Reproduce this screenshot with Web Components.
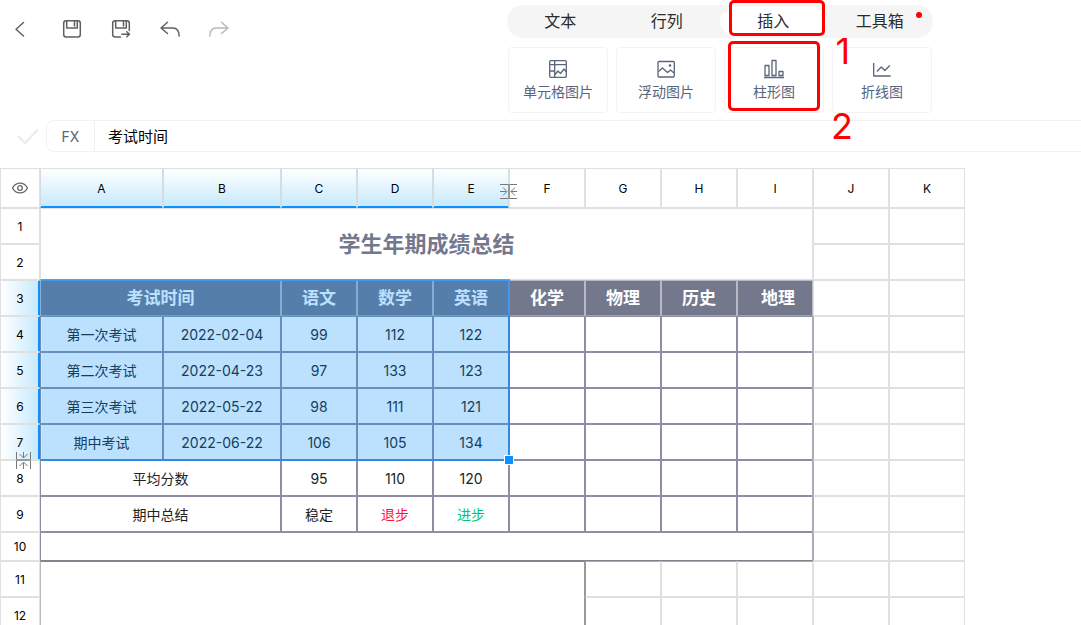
<!DOCTYPE html>
<html lang="zh-CN">
<head>
<meta charset="utf-8">
<title>学生年期成绩总结</title>
<style>
  body { margin: 0; height: 100vh; overflow: hidden; background: #fff; color: #222;
    font-family: Inter, "Noto Sans CJK SC", sans-serif; font-size: 14px; }
</style>
</head>
<body>
<sheet-app></sheet-app>

<template id="sheet-app">
  <style>
    :host { display: block; }
    header { display: flex; justify-content: space-between; align-items: flex-start; height: 120px; }
    nav { display: flex; gap: 25px; padding: 17px 0 0 8px; }
    nav icon-button:first-child { margin-right: 3px; }
    .tools { width: 426px; margin: 5px 148px 0 0; }
    .tabs { display: grid; grid-template-columns: repeat(4, 1fr); border-radius: 17px; background: #f5f5f5; }
    .cards { display: grid; grid-template-columns: repeat(4, 100px); gap: 8px; margin: 9px 0 0 1px; }
    data-sheet { margin-top: 16px; }
  </style>
  <header>
    <nav>
      <icon-button label="返回"><svg width="24" height="24" viewBox="0 0 24 24"><path d="M15.500 5.500 8 12.200 15.500 19"/></svg></icon-button>
      <icon-button label="保存"><svg width="24" height="24" viewBox="0 0 24 24"><rect x="3.700" y="3.700" width="16.600" height="16.200" rx="2.500"/><path d="M6.700 4v7h10.600V4M14.500 4v5"/></svg></icon-button>
      <icon-button label="另存为"><svg width="24" height="24" viewBox="0 0 24 24"><path d="M11.500 19.900H6.200a2.500 2.500 0 0 1-2.500-2.500V6.200a2.500 2.500 0 0 1 2.500-2.500h11.600a2.500 2.500 0 0 1 2.500 2.500v7.300M6.700 4v7h10.600V4M14.500 4v5M12.800 17.300h7.500M17.800 14.800l2.700 2.500-2.700 2.500"/></svg></icon-button>
      <icon-button label="撤销"><svg width="24" height="24" viewBox="0 0 24 24"><path d="M9.500 5.300 3 11l6.500 5.500M3.300 11H15c4 0 6 2.800 6.200 8"/></svg></icon-button>
      <icon-button label="重做" faded><svg width="24" height="24" viewBox="0 0 24 24"><path d="M14.500 5.300 21 11l-6.500 5.500M20.700 11H9c-4 0-6 2.800-6.200 8"/></svg></icon-button>
    </nav>
    <div class="tools">
      <div class="tabs">
        <tool-tab>文本</tool-tab>
        <tool-tab>行列</tool-tab>
        <tool-tab active>插入<step-mark slot="mark" class="tab">1</step-mark></tool-tab>
        <tool-tab dot>工具箱</tool-tab>
      </div>
      <div class="cards">
        <insert-card><svg slot="icon" width="20" height="20" viewBox="0 0 20 20"><rect x="1.700" y="1.700" width="16.600" height="16.600" rx="1"/><path d="M1.700 5.700h16.600M6.700 1.700v16.600M1.700 12h5M7 15.500l3-3.500 2.500 2.500 3.500-4.500 2.300 3"/></svg>单元格图片</insert-card>
        <insert-card><svg slot="icon" width="20" height="20" viewBox="0 0 20 20"><rect x="2" y="2.500" width="16.300" height="15.500" rx="1"/><path d="M2.500 12.500 6.500 9l5 4.500 3-2.500 3.500 3"/><circle cx="14" cy="6.500" r=".7"/></svg>浮动图片</insert-card>
        <insert-card><svg slot="icon" width="20" height="20" viewBox="0 0 20 20"><path d="M0 18.500h20M1 6.500h4v10H1zM8 1.500h4v15H8zM15 12.500h4v4h-4z"/></svg>柱形图<step-mark slot="mark" class="card">2</step-mark></insert-card>
        <insert-card><svg slot="icon" width="20" height="20" viewBox="0 0 20 20"><path d="M1.700 4v13h17M5 12.500l4.300-4.500 3.500 3.500 5-5"/></svg>折线图</insert-card>
      </div>
    </div>
  </header>
  <formula-bar value="考试时间"></formula-bar>
  <data-sheet></data-sheet>
</template>

<template id="icon-button">
  <style>
    :host { display: block; color: #606060; }
    :host([faded]) { color: #b8b8b8; }
    button { display: block; padding: 0; border: 0; background: none; color: inherit; }
    ::slotted(svg) { display: block; fill: none; stroke: currentColor; stroke-width: 1.5; stroke-linecap: round; stroke-linejoin: round; }
  </style>
  <button type="button"><slot></slot></button>
</template>

<template id="tool-tab">
  <style>
    :host { display: block; position: relative; }
    button { display: block; width: 100%; height: 33px; padding: 0; border: 0; border-radius: 17px;
      background: none; color: #2b2b2b; font: inherit; font-size: 16px; line-height: 33px; }
    :host([active]) button { background: #fff; background-clip: padding-box; border: 2px solid transparent; border-width: 2px 0; line-height: 29px; }
    :host([dot])::after { content: ""; position: absolute; right: 11px; top: 7px; width: 6px; height: 6px; border-radius: 50%; background: #f00; }
  </style>
  <button type="button"><slot></slot></button><slot name="mark"></slot>
</template>

<template id="insert-card">
  <style>
    :host { display: block; position: relative; }
    button { display: flex; flex-direction: column; align-items: center; gap: 3px; width: 100%; height: 66px; padding: 11px 0 0;
      border: 1px solid #f3f3f3; border-radius: 4px; background: #fff; color: #58657b; font: inherit; font-size: 14px; line-height: 20px; }
    ::slotted(svg) { display: block; fill: none; stroke: currentColor; stroke-width: 1.3; stroke-linejoin: round; }
  </style>
  <button type="button"><slot name="icon"></slot><span><slot></slot></span></button><slot name="mark"></slot>
</template>

<template id="step-mark">
  <style>
    :host { position: absolute; z-index: 2; box-sizing: border-box; border: 3px solid #f00; border-radius: 5px;
      color: #f00; font-size: 36px; line-height: 36px; pointer-events: none; }
    :host(.tab) { inset: -5px 2px 2px 9px; }
    :host(.card) { inset: -6px 4px 2px 4px; }
    span { position: absolute; left: 100%; top: 100%; margin-left: 14px; }
  </style>
  <span><slot></slot></span>
</template>

<template id="formula-bar">
  <style>
    :host { display: flex; align-items: center; }
    svg { flex: none; margin: 0 8px 0 16px; }
    .field { flex: 1; display: flex; box-sizing: border-box; height: 32px; border: 1px solid #f2f2f2; border-right: 0; border-radius: 8px 0 0 8px; }
    label { width: 47px; border-right: 1px solid #f0f0f0; color: #58657b; line-height: 32px; text-align: center; }
    input { flex: 1; min-width: 0; padding: 0 13px 2px; border: 0; outline: 0; background: none; color: #000; font: inherit; font-size: 15px; }
  </style>
  <svg width="22" height="22" viewBox="0 0 22 22" fill="none" stroke="#ebebeb" stroke-width="2"><path d="M2 11l7 7L22 4.500"/></svg>
  <div class="field"><label for="fx">FX</label><input id="fx" type="text"></div>
</template>

<template id="data-sheet">
  <style>
    :host { display: block; position: relative; }
    table { table-layout: fixed; width: 965px; border-collapse: separate; border-spacing: 0; }
    .rows { width: 40px; } .a { width: 123px; } .b { width: 118px; } .n { width: 76px; }
    tr { height: 36px; } thead tr { height: 40px; } tr.short { height: 29px; }
    th, td { box-sizing: border-box; padding: 2px 0 0; border: 1px solid; text-align: center; line-height: 20px;
      border-color: var(--t, var(--line)) var(--r, var(--line)) var(--b, var(--line)) var(--l, var(--line)); --line: #e0e0e0; }
    th { color: #000; font-size: 12px; font-weight: 400; }
    .short th, .short td { padding-top: 0; }
    thead th.on { --r: #d3dde3; --l: #d3dde3; --b: #0a91ff; background: linear-gradient(#fff, #c6e9fd); box-shadow: inset 0 -1px #0a91ff; }
    tbody th.on { --r: #0a91ff; background: linear-gradient(90deg, #fff, #c6e9fd); box-shadow: inset -1px 0 #0a91ff; }
    th svg { display: block; margin: -2px auto 0; }
    .dark { --line: #8e8ea3; }
    .head { --line: #b7b8c2; --b: #9fa0ae; padding-top: 0; background: #74788d; color: #fff; font-size: 17px; font-weight: 700; }
    .title { padding-top: 0; color: #74788d; font-size: 22px; font-weight: 700; line-height: 30px; }
    .last { --r: #abaab9; } .after { --l: #abaab9; }
    .blank { --r: #abaab9; --b: #85828d; }
    .image { --line: #999; --t: #85828d; --l: #bbb; }
    .under { --t: #abaab9; } .beside { --l: #999; }
    .down { color: #ff0f3c; } .up { color: #00c773; }
    .geo { padding-left: 6px; }
    .selection { position: absolute; left: 40px; top: 111px; box-sizing: border-box; width: 470px; height: 182px;
      border: 2px solid rgba(0, 136, 255, .65); border-left-color: rgba(0, 136, 255, .2); background: rgba(0, 142, 255, .265); background-clip: padding-box; pointer-events: none; }
    .selection::after { content: ""; position: absolute; right: -6px; bottom: -6px; width: 8px; height: 8px; border: 1px solid #fff; background: #0a91ff; }
    .grip { position: absolute; fill: none; stroke: #777; }
    .cols { left: 500px; top: 15px; } .lines { left: 15px; top: 283px; }
  </style>
  <table>
    <colgroup><col class="rows"><col class="a"><col class="b"><col class="n" span="9"></colgroup>
    <thead></thead><tbody></tbody>
  </table>
  <div class="selection"></div>
  <svg class="grip cols" width="18" height="18" viewBox="0 0 18 18"><path d="M0 1.500h17M0 15.500h17M0 8.500h6M3 4.500l4 4-4 4M17 8.500h-6M15 4.500l-4 4 4 4"/><path d="M9 1v15" stroke="#999" stroke-width="2"/></svg>
  <svg class="grip lines" width="18" height="18" viewBox="0 0 18 18"><path d="M1.500 1v17M15.500 1v17M8.500 1v6M4.500 3l4 4 4-4M8.500 18v-6M4.500 15l4-4 4 4"/><path d="M1 9h15" stroke="#999" stroke-width="2"/></svg>
</template>

<script>
  const define = (name, setup) => customElements.define(name, class extends HTMLElement {
    constructor() {
      super();
      this.attachShadow({ mode: "open" }).append(document.getElementById(name).content.cloneNode(true));
    }
    connectedCallback() { if (setup) setup(this, this.shadowRoot); }
  });

  define("icon-button", (el, root) => root.querySelector("button").setAttribute("aria-label", el.getAttribute("label")));
  define("tool-tab");
  define("insert-card");
  define("step-mark");
  define("formula-bar", (el, root) => { root.querySelector("input").value = el.getAttribute("value"); });

  // A cell is [text, class, colspan, rowspan].
  const dark = (...texts) => texts.map(text => [text, "dark"]);
  const empty = n => Array.from({ length: n }, () => [""]);
  const tail = [["", "dark"], ["", "dark"], ["", "dark"], ["", "dark last"], ["", "after"], [""]];
  const rows = [
    [["学生年期成绩总结", "title", 9, 2], ...empty(2)],
    empty(2),
    [["考试时间", "head", 2], ...["语文", "数学", "英语", "化学", "物理", "历史"].map(t => [t, "head"]), ["地理", "head geo"], ...empty(2)],
    [...dark("第一次考试", "2022-02-04", "99", "112", "122"), ...tail],
    [...dark("第二次考试", "2022-04-23", "97", "133", "123"), ...tail],
    [...dark("第三次考试", "2022-05-22", "98", "111", "121"), ...tail],
    [...dark("期中考试", "2022-06-22", "106", "105", "134"), ...tail],
    [["平均分数", "dark", 2], ...dark("95", "110", "120"), ...tail],
    [["期中总结", "dark", 2], ["稳定", "dark"], ["退步", "dark down"], ["进步", "dark up"], ...tail],
    [["", "dark blank", 9], ["", "after"], [""]],
    [["", "image", 6, 2], ["", "under beside"], ["", "under"], ["", "under"], ...empty(2)],
    [["", "beside"], ...empty(4)]
  ];

  define("data-sheet", (el, root) => {
    const eye = '<svg width="18" height="14" viewBox="0 0 18 14" fill="none" stroke="#666" stroke-width="1.300" role="img" aria-label="显示"><path d="M1.500 7C5 .5 13 .5 16.500 7 13 13.500 5 13.500 1.500 7z"/><circle cx="9" cy="7" r="2.300"/></svg>';
    root.querySelector("thead").innerHTML = `<tr><th>${eye}</th>` + [..."ABCDEFGHIJK"].map((c, i) =>
      `<th scope="col" class="${i < 5 ? "on" : ""}">${c}</th>`).join("") + "</tr>";
    root.querySelector("tbody").innerHTML = rows.map((cells, i) =>
      `<tr class="${i === 9 ? "short" : ""}"><th scope="row" class="${i > 1 && i < 7 ? "on" : ""}">${i + 1}</th>` +
      cells.map(([text, cls = "", cs = 1, rs = 1]) => `<td class="${cls}" colspan="${cs}" rowspan="${rs}">${text}</td>`).join("") +
      "</tr>").join("");
  });
  define("sheet-app");
</script>
</body>
</html>
